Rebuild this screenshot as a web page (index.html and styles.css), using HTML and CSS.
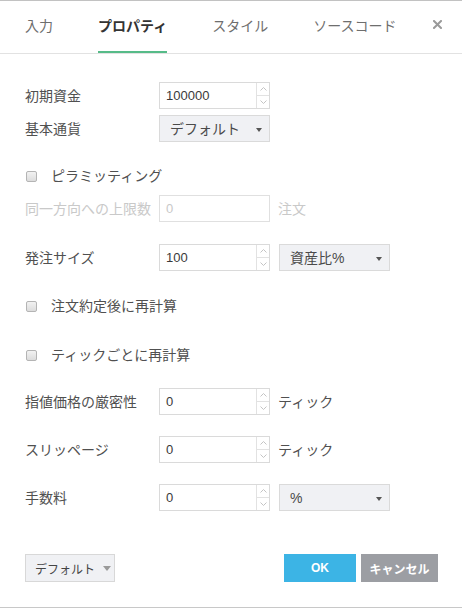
FILE: index.html
```html
<!DOCTYPE html>
<html lang="ja">
<head>
<meta charset="utf-8">
<link rel="stylesheet" href="styles.css">
</head>
<body>
<div class="dialog">
  <div class="tabs">
    <div class="tab-group">
      <div class="tab">入力</div>
      <div class="tab active">プロパティ</div>
      <div class="tab">スタイル</div>
      <div class="tab">ソースコード</div>
    </div>
    <button class="close" aria-label="close"><svg width="9" height="9" viewBox="0 0 9 9"><path d="M1 1 L8 8 M8 1 L1 8" stroke="#9a9a9a" stroke-width="2" stroke-linecap="square"/></svg></button>
  </div>
  <div class="content">
    <div class="row r1">
      <span class="label">初期資金</span>
      <div class="spin"><span class="val">100000</span><span class="arrows"><span class="arr"><svg width="7" height="4" viewBox="0 0 7 4"><path d="M0.5 3.5 L3.5 0.5 L6.5 3.5" fill="none" stroke="#c4c4c4" stroke-width="1"/></svg></span><span class="arr"><svg width="7" height="4" viewBox="0 0 7 4"><path d="M0.5 0.5 L3.5 3.5 L6.5 0.5" fill="none" stroke="#c4c4c4" stroke-width="1"/></svg></span></span></div>
    </div>
    <div class="row r2">
      <span class="label">基本通貨</span>
      <div class="select"><span class="sel-text">デフォルト</span><span class="caret"></span></div>
    </div>
    <div class="check-row c1">
      <span class="box"></span><span class="check-label">ピラミッティング</span>
    </div>
    <div class="row r4 disabled">
      <span class="label">同一方向への上限数</span>
      <div class="field"><span class="val">0</span></div>
      <span class="unit">注文</span>
    </div>
    <div class="row r5">
      <span class="label">発注サイズ</span>
      <div class="spin"><span class="val">100</span><span class="arrows"><span class="arr"><svg width="7" height="4" viewBox="0 0 7 4"><path d="M0.5 3.5 L3.5 0.5 L6.5 3.5" fill="none" stroke="#c4c4c4" stroke-width="1"/></svg></span><span class="arr"><svg width="7" height="4" viewBox="0 0 7 4"><path d="M0.5 0.5 L3.5 3.5 L6.5 0.5" fill="none" stroke="#c4c4c4" stroke-width="1"/></svg></span></span></div>
      <div class="select wide"><span class="sel-text">資産比%</span><span class="caret"></span></div>
    </div>
    <div class="check-row c2">
      <span class="box"></span><span class="check-label">注文約定後に再計算</span>
    </div>
    <div class="check-row c3">
      <span class="box"></span><span class="check-label">ティックごとに再計算</span>
    </div>
    <div class="row r8">
      <span class="label">指値価格の厳密性</span>
      <div class="spin"><span class="val">0</span><span class="arrows"><span class="arr"><svg width="7" height="4" viewBox="0 0 7 4"><path d="M0.5 3.5 L3.5 0.5 L6.5 3.5" fill="none" stroke="#c4c4c4" stroke-width="1"/></svg></span><span class="arr"><svg width="7" height="4" viewBox="0 0 7 4"><path d="M0.5 0.5 L3.5 3.5 L6.5 0.5" fill="none" stroke="#c4c4c4" stroke-width="1"/></svg></span></span></div>
      <span class="unit">ティック</span>
    </div>
    <div class="row r9">
      <span class="label">スリッページ</span>
      <div class="spin"><span class="val">0</span><span class="arrows"><span class="arr"><svg width="7" height="4" viewBox="0 0 7 4"><path d="M0.5 3.5 L3.5 0.5 L6.5 3.5" fill="none" stroke="#c4c4c4" stroke-width="1"/></svg></span><span class="arr"><svg width="7" height="4" viewBox="0 0 7 4"><path d="M0.5 0.5 L3.5 3.5 L6.5 0.5" fill="none" stroke="#c4c4c4" stroke-width="1"/></svg></span></span></div>
      <span class="unit">ティック</span>
    </div>
    <div class="row r10">
      <span class="label">手数料</span>
      <div class="spin"><span class="val">0</span><span class="arrows"><span class="arr"><svg width="7" height="4" viewBox="0 0 7 4"><path d="M0.5 3.5 L3.5 0.5 L6.5 3.5" fill="none" stroke="#c4c4c4" stroke-width="1"/></svg></span><span class="arr"><svg width="7" height="4" viewBox="0 0 7 4"><path d="M0.5 0.5 L3.5 3.5 L6.5 0.5" fill="none" stroke="#c4c4c4" stroke-width="1"/></svg></span></span></div>
      <div class="select wide"><span class="sel-text">%</span><span class="caret"></span></div>
    </div>
  </div>
  <div class="footer">
    <div class="btn-default"><span>デフォルト</span><span class="caret light"></span></div>
    <div class="actions">
      <div class="btn ok">OK</div>
      <div class="btn cancel">キャンセル</div>
    </div>
  </div>
</div>
</body>
</html>
```

FILE: styles.css
```css
html, body {
  margin: 0;
  padding: 0;
  background: #fff;
}
body {
  font-family: "Liberation Sans", "Noto Sans CJK JP", sans-serif;
  color: #505050;
}
.dialog {
  width: 462px;
  height: 608px;
  box-sizing: border-box;
  border-top: 1px solid #c2c2c2;
  border-bottom: 1px solid #c8c8c8;
  display: flex;
  flex-direction: column;
}
.tabs {
  display: flex;
  align-items: flex-start;
  justify-content: space-between;
  padding-left: 25px;
  padding-right: 20px;
  height: 52px;
  border-bottom: 1px solid #e2e2e2;
}
.tab-group {
  display: flex;
  gap: 45px;
}
.tab {
  font-size: 14px;
  line-height: 20px;
  padding-top: 15px;
  padding-bottom: 15px;
  border-bottom: 2px solid transparent;
  color: #6e6e6e;
  white-space: nowrap;
}
.tab.active {
  color: #333;
  font-weight: bold;
  border-bottom-color: #56bb88;
}
.close {
  margin-top: 19px;
  padding: 0;
  border: 0;
  background: none;
  width: 9px;
  height: 9px;
  display: flex;
}
.content {
  display: flex;
  flex-direction: column;
}
.row {
  display: flex;
  align-items: center;
  height: 27px;
  padding-left: 25px;
}
.label {
  width: 134px;
  font-size: 14px;
  line-height: 20px;
  color: #505050;
  white-space: nowrap;
}
.r1 { margin-top: 28px; }
.r2 { margin-top: 6px; }
.c1 { margin-top: 24px; }
.r4 { margin-top: 9px; }
.r5 { margin-top: 22px; }
.c2 { margin-top: 25px; }
.c3 { margin-top: 29px; }
.r8 { margin-top: 23px; }
.r9 { margin-top: 21px; }
.r10 { margin-top: 21px; }

.spin, .field {
  width: 111px;
  height: 27px;
  box-sizing: border-box;
  border: 1px solid #dadada;
  display: flex;
  background: #fff;
}
.val {
  flex: 1;
  font-size: 13px;
  line-height: 25px;
  padding-left: 6px;
  color: #3a3a3a;
}
.arrows {
  width: 12px;
  border-left: 1px solid #e2e2e2;
  display: flex;
  flex-direction: column;
}
.arr {
  flex: 1;
  display: flex;
  align-items: center;
  justify-content: center;
}
.arr + .arr {
  border-top: 1px solid #e2e2e2;
}
.select {
  width: 111px;
  height: 27px;
  box-sizing: border-box;
  border: 1px solid #dadada;
  background: #f0f1f4;
  display: flex;
  align-items: center;
  padding-left: 10px;
  padding-right: 7px;
}
.select.wide {
  margin-left: 9px;
}
.sel-text {
  flex: 1;
  font-size: 14px;
  line-height: 20px;
  color: #4a4a4a;
}
.caret {
  width: 0;
  height: 0;
  border-left: 3.5px solid transparent;
  border-right: 3.5px solid transparent;
  border-top: 4px solid #555;
  margin-top: 2px;
}
.caret.light {
  border-left-width: 4px;
  border-right-width: 4px;
  border-top: 5px solid #9a9a9a;
  margin-top: 0;
}
.unit {
  margin-left: 8px;
  font-size: 14px;
  line-height: 20px;
  color: #505050;
}
.disabled .label,
.disabled .unit,
.disabled .val {
  color: #c9c9c9;
}
.disabled .field {
  border-color: #e0e0e0;
}
.check-row {
  display: flex;
  align-items: center;
  height: 20px;
  padding-left: 26px;
}
.box {
  width: 11px;
  height: 11px;
  box-sizing: border-box;
  border: 1px solid #b4b4b4;
  border-radius: 2px;
  background: linear-gradient(#f2f2f2, #dcdcdc);
}
.check-label {
  margin-left: 14px;
  font-size: 14px;
  line-height: 20px;
  color: #505050;
}
.footer {
  margin-top: 43px;
  display: flex;
  align-items: center;
  justify-content: space-between;
  padding-left: 25px;
  padding-right: 24px;
}
.btn-default {
  width: 90px;
  height: 28px;
  box-sizing: border-box;
  border: 1px solid #d8d8d8;
  background: #f0f1f4;
  display: flex;
  align-items: center;
  padding-left: 9px;
  gap: 8px;
  font-size: 12px;
  color: #444;
}
.actions {
  display: flex;
  gap: 5px;
}
.btn {
  height: 28px;
  display: flex;
  align-items: center;
  justify-content: center;
  font-size: 12px;
  font-weight: bold;
  color: #fff;
}
.ok {
  width: 72px;
  background: #3cb4e5;
}
.cancel {
  width: 77px;
  background: #9c9ea3;
}
```
